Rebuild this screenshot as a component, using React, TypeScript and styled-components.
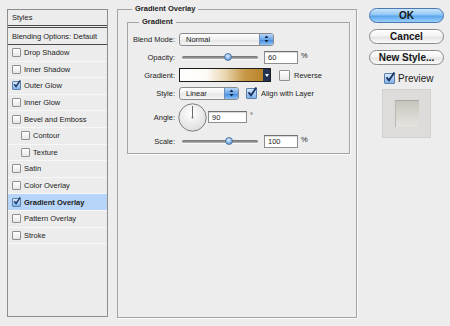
import styled, { createGlobalStyle } from "styled-components";

const GlobalStyle = createGlobalStyle`
  html, body {
    margin: 0;
    padding: 0;
    background: #ededed;
  }
  body {
    font-family: "Liberation Sans", Arial, sans-serif;
    color: #1c1c1c;
  }
`;

const Dialog = styled.div`
  display: flex;
  align-items: flex-start;
  width: 450px;
  height: 326px;
  box-sizing: border-box;
  padding: 4px 0 0 7px;
  background: #ededed;
  overflow: hidden;
`;

/* ---------- left list ---------- */

const StylesPanel = styled.aside`
  margin-top: 5px;
  width: 101px;
  height: 308px;
  box-sizing: border-box;
  border: 1px solid #8d8d8d;
  background: #ececec;
  display: flex;
  flex-direction: column;
`;

const PanelHeader = styled.div<{ $double?: boolean }>`
  height: ${(p) => (p.$double ? 15 : 16)}px;
  display: flex;
  align-items: center;
  padding-left: 4px;
  font-size: 7.5px;
  border-bottom: ${(p) => (p.$double ? "3px double #4a4a4a" : "1px solid #4a4a4a")};
`;

const StyleRow = styled.div<{ $selected?: boolean; $indent?: boolean }>`
  height: 16.6px;
  box-sizing: border-box;
  display: flex;
  align-items: center;
  gap: 3px;
  padding-left: ${(p) => (p.$indent ? 13 : 4)}px;
  font-size: 7.5px;
  font-weight: ${(p) => (p.$selected ? "bold" : "normal")};
  background: ${(p) => (p.$selected ? "#b7d5f8" : "transparent")};
  border-bottom: 1px solid #f7f7f7;
`;

/* ---------- checkbox ---------- */

const Box = styled.span<{ $checked?: boolean; $size?: number }>`
  position: relative;
  flex: none;
  width: ${(p) => p.$size ?? 7}px;
  height: ${(p) => p.$size ?? 7}px;
  border: 1px solid ${(p) => (p.$checked ? "#5e7fa8" : "#8f8f8f")};
  border-radius: 1px;
  background: ${(p) =>
    p.$checked
      ? "linear-gradient(#d8e9fc, #7fb3ec)"
      : "linear-gradient(#ffffff, #e6e6e6)"};
`;

const Tick = styled.svg`
  position: absolute;
  left: 0;
  top: -2px;
  width: 110%;
  height: 110%;
  overflow: visible;
`;

function Check({ checked, size }: { checked?: boolean; size?: number }) {
  return (
    <Box $checked={checked} $size={size}>
      {checked && (
        <Tick viewBox="0 0 10 10">
          <path d="M1.5 5.5 L4 8.5 L9.5 0.5" fill="none" stroke="#1f3766" strokeWidth="1.9" />
        </Tick>
      )}
    </Box>
  );
}

/* ---------- centre panel ---------- */

const Group = styled.fieldset`
  margin: 0 0 0 9px;
  width: 240px;
  height: 314px;
  box-sizing: border-box;
  padding: 3px 6px 0 9px;
  border: 1px solid #a4a4a4;
  box-shadow: 1px 1px 0 #fafafa;
`;

const InnerGroup = styled.fieldset`
  margin: 0;
  padding: 5px 0 5px 0;
  border: 1px solid #a4a4a4;
  box-shadow: 1px 1px 0 #fafafa;
  display: flex;
  flex-direction: column;
  gap: 4px;
`;

const Legend = styled.legend<{ $offset: number }>`
  margin-left: ${(p) => p.$offset}px;
  padding: 0 3px;
  font-size: 7.5px;
  font-weight: bold;
  line-height: 10px;
`;

const Row = styled.div<{ $h?: number }>`
  display: flex;
  align-items: center;
  height: ${(p) => p.$h ?? 14}px;
  font-size: 7.5px;
`;

const Label = styled.span`
  width: 47px;
  margin-right: 4px;
  text-align: right;
  flex: none;
`;

const Popup = styled.div<{ $w: number }>`
  width: ${(p) => p.$w}px;
  height: 13px;
  box-sizing: border-box;
  display: flex;
  align-items: center;
  border: 1px solid #8a8a8a;
  border-radius: 3px;
  background: linear-gradient(#ffffff, #efefef 50%, #e4e4e4 51%, #f6f6f6);
  padding-left: 6px;
  overflow: hidden;
  span:first-child {
    flex: 1;
  }
`;

const Stepper = styled.span`
  width: 13px;
  height: 100%;
  display: flex;
  align-items: center;
  justify-content: center;
  background: linear-gradient(#b4d6f8, #6aa6ea 50%, #3e86dc 51%, #8ec4f6);
  border-left: 1px solid #6f8fb8;
`;

function Arrows() {
  return (
    <svg width="5" height="8" viewBox="0 0 5 8">
      <path d="M0.5 3 L2.5 0.5 L4.5 3 Z M0.5 5 L2.5 7.5 L4.5 5 Z" fill="#13243f" />
    </svg>
  );
}

const Track = styled.div`
  position: relative;
  width: 76px;
  height: 3px;
  margin-left: 3px;
  border-radius: 2px;
  background: linear-gradient(#6c6c6c, #b4b4b4);
  box-shadow: 0 1px 0 #fbfbfb;
`;

const Thumb = styled.span`
  position: absolute;
  top: 50%;
  width: 8px;
  height: 8px;
  margin: -4px 0 0 -4px;
  border-radius: 50%;
  border: 1px solid #56799f;
  box-sizing: border-box;
  background: radial-gradient(circle at 45% 35%, #e4f0fc, #7fb1ea 55%, #3c79c6);
`;

const Field = styled.div<{ $w: number; $ml?: number; $h?: number }>`
  width: ${(p) => p.$w}px;
  height: ${(p) => p.$h ?? 13}px;
  margin-left: ${(p) => p.$ml ?? 0}px;
  box-sizing: border-box;
  border: 1px solid #8e8e8e;
  border-top-color: #6f6f6f;
  background: #fff;
  box-shadow: inset 0 1px 1px #d6d6d6;
  display: flex;
  align-items: center;
  padding-left: 3px;
`;

const Unit = styled.span<{ $top?: number }>`
  margin-left: 3px;
  align-self: flex-start;
  margin-top: ${(p) => p.$top ?? 1}px;
`;

const GradientBar = styled.div`
  width: 92px;
  height: 14px;
  box-sizing: border-box;
  border: 1px solid #1c1c1c;
  display: flex;
`;

const Ramp = styled.div`
  flex: 1;
  background: linear-gradient(
    90deg,
    #ffffff 0%,
    #fdfbf6 32%,
    #e9d4ae 55%,
    #c79847 78%,
    #b8842a 100%
  );
`;

const RampMenu = styled.div`
  width: 7px;
  background: #243354;
  display: flex;
  align-items: center;
  justify-content: center;
`;

const CheckLabel = styled.label<{ $ml: number }>`
  display: flex;
  align-items: center;
  gap: 4px;
  margin-left: ${(p) => p.$ml}px;
`;

const Dial = styled.svg`
  margin-left: -1px;
  flex: none;
`;

/* ---------- right column ---------- */

const Side = styled.div`
  margin-left: 12px;
  padding-top: 4px;
  width: 75px;
  display: flex;
  flex-direction: column;
  gap: 6px;
`;

const PillButton = styled.button<{ $primary?: boolean }>`
  width: 75px;
  height: 15px;
  padding: 0;
  border-radius: 8px;
  border: 1px solid ${(p) => (p.$primary ? "#4a78b4" : "#8a8a8a")};
  background: ${(p) =>
    p.$primary
      ? "linear-gradient(#cbe6fc 0%, #8ac4f5 48%, #58a3ec 52%, #9ad0fa 100%)"
      : "linear-gradient(#ffffff 0%, #f3f3f3 48%, #e3e3e3 52%, #fafafa 100%)"};
  font-family: "Liberation Sans", Arial, sans-serif;
  font-size: 10px;
  font-weight: bold;
  color: #151515;
  line-height: 13px;
`;

const PreviewToggle = styled.label`
  display: flex;
  align-items: center;
  gap: 3px;
  margin: 2px 0 0 15px;
  font-size: 10px;
  height: 10px;
`;

const Swatch = styled.div`
  margin: 0 0 0 13px;
  width: 49px;
  height: 49px;
  box-sizing: border-box;
  background: #dedbdb;
  border: 1px solid #d3d0d0;
  display: flex;
  align-items: center;
  justify-content: center;
`;

const SwatchInner = styled.div`
  width: 24px;
  height: 27px;
  box-sizing: border-box;
  border-top: 1px solid #a9a59f;
  border-left: 1px solid #bbb7b1;
  background: linear-gradient(#c7c3bc, #dcd9d4 60%, #e4e2df);
`;

const styleItems = [
  { name: "Drop Shadow" },
  { name: "Inner Shadow" },
  { name: "Outer Glow", checked: true },
  { name: "Inner Glow" },
  { name: "Bevel and Emboss" },
  { name: "Contour", indent: true },
  { name: "Texture", indent: true },
  { name: "Satin" },
  { name: "Color Overlay" },
  { name: "Gradient Overlay", checked: true, selected: true },
  { name: "Pattern Overlay" },
  { name: "Stroke" },
];

function Slider({ value }: { value: number }) {
  return (
    <Track>
      <Thumb style={{ left: `${value}px` }} />
    </Track>
  );
}

export default function App() {
  return (
    <>
      <GlobalStyle />
      <Dialog>
        <StylesPanel>
          <PanelHeader $double>Styles</PanelHeader>
          <PanelHeader>Blending Options: Default</PanelHeader>
          {styleItems.map((s) => (
            <StyleRow key={s.name} $selected={s.selected} $indent={s.indent}>
              <Check checked={s.checked} />
              {s.name}
            </StyleRow>
          ))}
        </StylesPanel>

        <Group>
          <Legend $offset={5}>Gradient Overlay</Legend>
          <InnerGroup>
            <Legend $offset={11}>Gradient</Legend>
            <Row>
              <Label>Blend Mode:</Label>
              <Popup $w={95}>
                <span>Normal</span>
                <Stepper>
                  <Arrows />
                </Stepper>
              </Popup>
            </Row>
            <Row>
              <Label>Opacity:</Label>
              <Slider value={46} />
              <Field $w={34} $ml={6}>60</Field>
              <Unit>%</Unit>
            </Row>
            <Row>
              <Label>Gradient:</Label>
              <GradientBar>
                <Ramp />
                <RampMenu>
                  <svg width="4" height="3" viewBox="0 0 4 3">
                    <path d="M0 0 L4 0 L2 3 Z" fill="#ffffff" />
                  </svg>
                </RampMenu>
              </GradientBar>
              <CheckLabel $ml={8}>
                <Check size={9} />
                Reverse
              </CheckLabel>
            </Row>
            <Row>
              <Label>Style:</Label>
              <Popup $w={60}>
                <span>Linear</span>
                <Stepper>
                  <Arrows />
                </Stepper>
              </Popup>
              <CheckLabel $ml={7}>
                <Check size={9} checked />
                Align with Layer
              </CheckLabel>
            </Row>
            <Row $h={26}>
              <Label>Angle:</Label>
              <Dial width="29" height="29" viewBox="0 0 29 29">
                <defs>
                  <radialGradient id="dialFill" cx="45%" cy="35%" r="70%">
                    <stop offset="0%" stopColor="#ffffff" />
                    <stop offset="100%" stopColor="#dcdcdc" />
                  </radialGradient>
                </defs>
                <circle cx="14.5" cy="14.5" r="13.7" fill="url(#dialFill)" stroke="#7d7d7d" strokeWidth="1" />
                <line x1="14.5" y1="14.5" x2="14.5" y2="3" stroke="#6a6a6a" strokeWidth="1" />
                <circle cx="14.5" cy="14.5" r="0.9" fill="#6a6a6a" />
              </Dial>
              <Field $w={39} $ml={1} $h={12}>90</Field>
              <Unit $top={7}>°</Unit>
            </Row>
            <Row>
              <Label>Scale:</Label>
              <Slider value={47} />
              <Field $w={34} $ml={6}>100</Field>
              <Unit>%</Unit>
            </Row>
          </InnerGroup>
        </Group>

        <Side>
          <PillButton $primary>OK</PillButton>
          <PillButton>Cancel</PillButton>
          <PillButton>New Style...</PillButton>
          <PreviewToggle>
            <Check size={9} checked />
            Preview
          </PreviewToggle>
          <Swatch>
            <SwatchInner />
          </Swatch>
        </Side>
      </Dialog>
    </>
  );
}
